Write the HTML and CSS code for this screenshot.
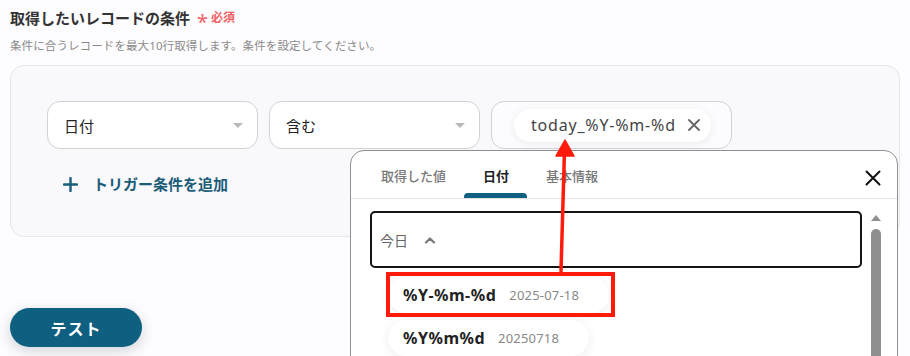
FILE: index.html
```html
<!DOCTYPE html>
<html lang="ja">
<head>
    <meta charset="UTF-8">
    <meta name="viewport" content="width=device-width, initial-scale=1.0">
    <title>取得したいレコードの条件</title>
    <link rel="stylesheet" href="styles.css">
</head>
<body>
    <main class="page">
        <h2 class="title">取得したいレコードの条件 <span class="required"><span class="star">*</span>必須</span></h2>
        <p class="hint">条件に合うレコードを最大10行取得します。条件を設定してください。</p>

        <section class="condition-card">
            <div class="condition-row">
                <div class="select">
                    <span>日付</span>
                    <span class="caret"></span>
                </div>
                <div class="select">
                    <span>含む</span>
                    <span class="caret"></span>
                </div>
                <div class="select select-value">
                    <div class="chip">
                        <span>today_%Y-%m-%d</span>
                        <svg class="chip-close" width="12" height="12" viewBox="0 0 12 12">
                            <path d="M1 1 L11 11 M11 1 L1 11" stroke="#666" stroke-width="1.8" stroke-linecap="round"/>
                        </svg>
                    </div>
                </div>
            </div>
            <div class="add-condition">
                <svg width="15" height="15" viewBox="0 0 15 15">
                    <path d="M7.5 1 V14 M1 7.5 H14" stroke="#1b5d79" stroke-width="2.4" stroke-linecap="round"/>
                </svg>
                <span>トリガー条件を追加</span>
            </div>
        </section>

        <button class="test-button">テスト</button>
    </main>

    <!-- value picker popup -->
    <div class="picker">
        <div class="picker-tabs">
            <div class="tab">取得した値</div>
            <div class="tab active">日付</div>
            <div class="tab">基本情報</div>
            <svg class="picker-close" width="16" height="16" viewBox="0 0 16 16">
                <path d="M1.5 1.5 L14.5 14.5 M14.5 1.5 L1.5 14.5" stroke="#111" stroke-width="2" stroke-linecap="round"/>
            </svg>
        </div>
        <div class="picker-body">
            <div class="picker-content">
                <div class="group-head">
                    <span>今日</span>
                    <svg width="12" height="8" viewBox="0 0 12 8">
                        <path d="M2 6.5 L6 2.5 L10 6.5" fill="none" stroke="#777" stroke-width="2.2" stroke-linecap="round" stroke-linejoin="round"/>
                    </svg>
                </div>
                <div class="option-list">
                    <div class="option"><span class="option-key">%Y-%m-%d</span><span class="option-value">2025-07-18</span></div>
                    <div class="option"><span class="option-key">%Y%m%d</span><span class="option-value">20250718</span></div>
                </div>
            </div>
            <div class="scrollbar">
                <span class="scroll-up"></span>
                <span class="scroll-thumb"></span>
            </div>
        </div>
    </div>

    <!-- annotation overlay -->
    <div class="highlight-box"></div>
    <svg class="arrow" width="910" height="356" viewBox="0 0 910 356">
        <path d="M561 271 L564.5 150" stroke="#ff1a0a" stroke-width="3.5" stroke-linecap="round"/>
        <path d="M556 156 L565 140 L574 156 Z" fill="#ff1a0a" stroke="#ff1a0a" stroke-width="1.5" stroke-linejoin="round"/>
    </svg>
</body>
</html>
```

FILE: styles.css
```css
html, body {
    height: 100%;
    overflow: hidden;
}

body {
    margin: 0;
    font-family: 'Noto Sans', 'Noto Sans CJK JP', sans-serif;
    background: #fdfcfe;
    color: #222;
    position: relative;
}

.page {
    padding: 8px 10px;
}

.title {
    margin: 0;
    display: flex;
    align-items: center;
    gap: 7px;
    font-size: 15px;
    line-height: 20px;
    font-weight: 700;
    color: #333;
}

.required {
    display: flex;
    align-items: center;
    gap: 3px;
    font-size: 12px;
    font-weight: 600;
    color: #f25f62;
}

.required .star {
    font-size: 20px;
    font-weight: 400;
    line-height: 12px;
    padding-top: 7px;
}

.hint {
    margin: 9px 0 0;
    font-size: 11.5px;
    line-height: 18px;
    letter-spacing: 0.1px;
    color: #8a8a8a;
}

/* Condition card */
.condition-card {
    margin-top: 10px;
    background: #f9f8fb;
    border: 1px solid #e7e5ea;
    border-radius: 14px;
    padding: 35px 36px 42px;
}

.condition-row {
    display: flex;
    gap: 11px;
}

.select {
    width: 211px;
    height: 48px;
    box-sizing: border-box;
    display: flex;
    align-items: center;
    justify-content: space-between;
    padding: 0 14px 0 16px;
    background: #fff;
    border: 1px solid #d2d1d6;
    border-radius: 13px;
    font-size: 15px;
}

.caret {
    width: 0;
    height: 0;
    border-left: 5px solid transparent;
    border-right: 5px solid transparent;
    border-top: 5px solid #b9b9b9;
}

.select-value {
    width: 241px;
    padding-left: 22px;
    background: #fcfbfd;
}

.chip {
    height: 33px;
    display: flex;
    align-items: center;
    gap: 12px;
    padding: 0 11px 0 17px;
    background: #fff;
    border-radius: 17px;
    box-shadow: 0 2px 8px rgba(60, 50, 90, 0.08);
    font-size: 16px;
    letter-spacing: 0.8px;
    color: #444;
}

.add-condition {
    margin-top: 25px;
    margin-left: 16px;
    display: flex;
    align-items: center;
    gap: 15px;
    font-size: 15px;
    font-weight: 700;
    line-height: 20px;
    color: #1b5d79;
}

.test-button {
    margin-top: 71px;
    width: 132px;
    height: 39px;
    border: none;
    border-radius: 20px;
    background: #0e5f80;
    color: #fff;
    font-family: 'Noto Sans CJK JP', sans-serif;
    font-size: 16px;
    font-weight: 700;
    letter-spacing: 1px;
    box-shadow: 0 4px 14px rgba(0, 30, 50, 0.18);
}

/* Picker popup */
.picker {
    position: absolute;
    left: 350px;
    top: 150px;
    width: 548px;
    height: 240px;
    box-sizing: border-box;
    background: #fff;
    border: 1px solid #8f8f8f;
    border-radius: 14px;
}

.picker-tabs {
    display: flex;
    align-items: flex-start;
    height: 48px;
    box-sizing: border-box;
    padding-left: 11px;
    border-bottom: 1px solid #e3e3e6;
}

.tab {
    position: relative;
    height: 47px;
    box-sizing: border-box;
    padding: 15px 18px 0 19px;
    font-size: 13px;
    line-height: 20px;
    font-weight: 500;
    color: #777;
}

.tab.active {
    color: #222;
    font-weight: 700;
}

.tab.active::after {
    content: '';
    position: absolute;
    left: 0;
    right: 0;
    bottom: 0;
    height: 5px;
    background: #0e5f80;
    border-radius: 4px 4px 0 0;
}

.picker-close {
    margin: 19px 16px 0 auto;
}

.picker-body {
    display: flex;
    padding: 12px 0 0 19px;
}

.picker-content {
    width: 492px;
}

.group-head {
    height: 57px;
    box-sizing: border-box;
    display: flex;
    align-items: center;
    gap: 16px;
    padding-left: 8px;
    border: 2px solid #141414;
    border-radius: 5px;
    font-size: 14px;
    color: #666;
}

.option-list {
    margin: 9px 0 0 18px;
    display: flex;
    flex-direction: column;
    align-items: flex-start;
    gap: 7px;
}

.option {
    height: 36px;
    display: flex;
    align-items: center;
    gap: 13px;
    padding: 0 30px 0 15px;
    background: #fff;
    border-radius: 18px;
    box-shadow: 0 2px 10px rgba(60, 50, 90, 0.09);
}

.option-key {
    font-size: 16px;
    font-weight: 700;
    letter-spacing: 0.5px;
    color: #222;
}

.option-value {
    font-size: 13px;
    letter-spacing: 0.2px;
    color: #888;
}

.scrollbar {
    margin-left: 7px;
    width: 14px;
    display: flex;
    flex-direction: column;
    align-items: center;
}

.scroll-up {
    margin-top: 4px;
    width: 0;
    height: 0;
    border-left: 5px solid transparent;
    border-right: 5px solid transparent;
    border-bottom: 6px solid #8f8f8f;
}

.scroll-thumb {
    margin-top: 8px;
    width: 10px;
    height: 200px;
    background: #8f8f8f;
    border-radius: 5px;
}

/* Annotation */
.highlight-box {
    position: absolute;
    left: 386px;
    top: 272px;
    width: 229px;
    height: 45px;
    box-sizing: border-box;
    border: 4px solid #ff1a0a;
}

.arrow {
    position: absolute;
    left: 0;
    top: 0;
    pointer-events: none;
}
```
